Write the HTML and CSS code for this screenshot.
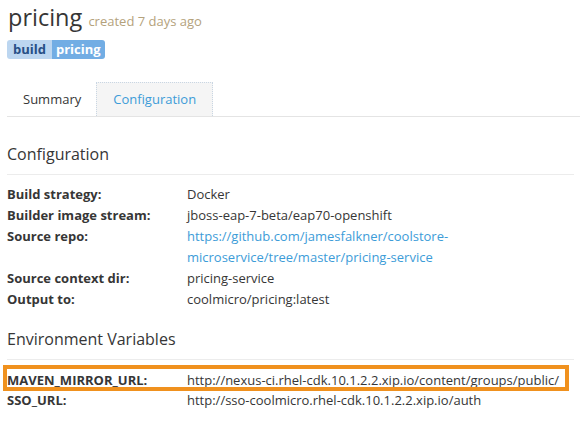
FILE: index.html
```html
<!DOCTYPE html>
<html>
<head>
<meta charset="utf-8">
<link rel="stylesheet" href="styles.css">
</head>
<body>
<div class="page">
  <h1 class="title">pricing <span class="created">created 7 days ago</span></h1>
  <div class="labels">
    <span class="label-key">build</span><span class="label-value">pricing</span>
  </div>
  <ul class="tabs">
    <li class="tab">Summary</li>
    <li class="tab active">Configuration</li>
  </ul>
  <h2 class="section-title first">Configuration</h2>
  <dl class="props">
    <dt>Build strategy:</dt><dd>Docker</dd>
    <dt>Builder image stream:</dt><dd>jboss-eap-7-beta/eap70-openshift</dd>
    <dt>Source repo:</dt><dd><a class="link">https://github.com/jamesfalkner/coolstore-microservice/tree/master/pricing-service</a></dd>
    <dt>Source context dir:</dt><dd>pricing-service</dd>
    <dt>Output to:</dt><dd>coolmicro/pricing:latest</dd>
  </dl>
  <h2 class="section-title">Environment Variables</h2>
  <dl class="props env">
    <div class="env-row highlight"><dt>MAVEN_MIRROR_URL:</dt><dd>http://nexus-ci.rhel-cdk.10.1.2.2.xip.io/content/groups/public/</dd></div>
    <div class="env-row"><dt>SSO_URL:</dt><dd>http://sso-coolmicro.rhel-cdk.10.1.2.2.xip.io/auth</dd></div>
  </dl>
</div>
</body>
</html>
```
FILE: styles.css
```css
html, body {
  margin: 0;
  padding: 0;
  background: #fff;
}
body {
  font-family: "Open Sans", "Liberation Sans", sans-serif;
  font-size: 13px;
  color: #363636;
}
.page {
  padding: 0 8px 0 7px;
}
.title {
  margin: 0;
  font-size: 23.5px;
  font-weight: 400;
  line-height: 35px;
  height: 34px;
  color: #363636;
  padding-left: 1px;
}
.created {
  font-size: 13px;
  line-height: 1;
  color: #b4a27c;
}
.labels {
  display: flex;
  margin-top: 6px;
  height: 19px;
}
.label-key, .label-value {
  font-weight: 700;
  font-size: 13px;
  line-height: 19px;
}
.label-key {
  background: #bcd6f0;
  color: #274f86;
  border-radius: 3px 0 0 3px;
  padding: 0 6px;
}
.label-value {
  background: #72ade4;
  color: #fff;
  border-radius: 0 3px 3px 0;
  padding: 0 4px;
}
.tabs {
  list-style: none;
  margin: 23px -6px 0 0;
  padding: 0;
  display: flex;
  border-bottom: 1px solid #e4e4e4;
}
.tab {
  height: 33px;
  line-height: 33px;
  padding: 0 15px;
  border: 1px solid transparent;
  border-bottom: none;
  color: #363636;
}
.tab.active {
  margin-left: -1px;
  padding: 0 16px;
  background: #f5f5f5;
  border: 1px dotted #c9d6e3;
  border-bottom: none;
  color: #3d9cd8;
}
.section-title {
  margin: 26px 0 0;
  font-size: 16px;
  font-weight: 400;
  line-height: 22px;
  color: #363636;
  padding-bottom: 9px;
  border-bottom: 1px solid #ececec;
}
.section-title:not(.first) {
  margin-top: 18px;
}
.props {
  display: grid;
  grid-template-columns: 180px 1fr;
  margin: 9px 0 0;
  line-height: 21px;
}
.props dt {
  font-weight: 700;
  margin: 0;
}
.props dd {
  margin: 0;
}
.link {
  color: #3d9cd8;
  text-decoration: none;
}
.props.env {
  display: block;
  margin-top: 10px;
}
.env-row {
  display: grid;
  grid-template-columns: 180px 1fr;
  position: relative;
  line-height: 20px;
}
.env-row.highlight::after {
  content: "";
  position: absolute;
  left: -4px;
  right: 5px;
  top: -5px;
  bottom: -1px;
  border: 4px solid #f0911e;
}
```
